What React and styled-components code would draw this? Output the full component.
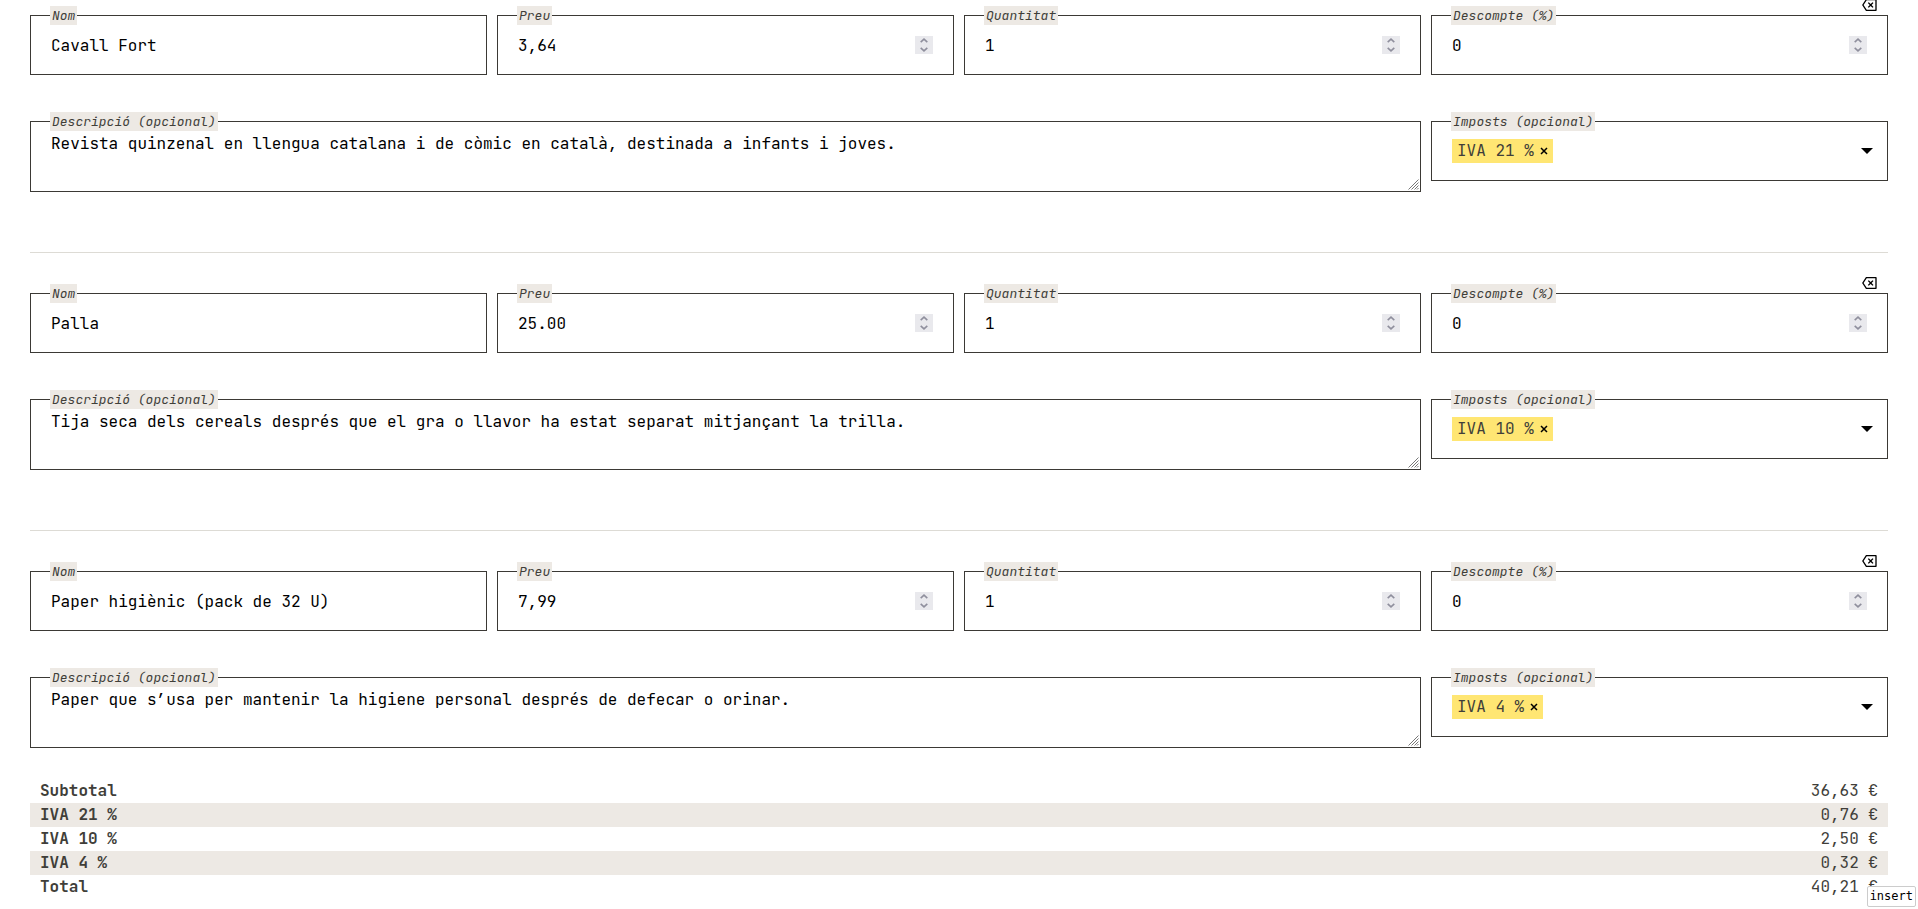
import React, { useState } from "react";
import styled, { createGlobalStyle } from "styled-components";
import { RiDeleteBack2Line } from "react-icons/ri";

const GlobalStyle = createGlobalStyle`
  *, *::before, *::after {
    box-sizing: border-box;
  }

  body {
    margin: 0;
    background: #fff;
    color: #403e39;
    font-family: "JetBrains Mono", "DejaVu Sans Mono", monospace;
    font-size: 16px;
    line-height: 24px;
  }

  input, textarea, select, button {
    font: inherit;
  }
`;

const Form = styled.form`
  padding: 0 30px;
`;

const Product = styled.section`
  position: relative;
  display: grid;
  grid-template-columns: repeat(4, minmax(0, 1fr));
  column-gap: 10px;
  row-gap: 46px;
  align-items: start;
  margin-bottom: 25px;
  padding: 15px 0 60px;
  border-bottom: 1px solid #dddbd5;

  &:last-of-type {
    margin-bottom: 31px;
    padding-bottom: 0;
    border-bottom: 0;
  }
`;

const RemoveButton = styled.button`
  position: absolute;
  top: -3px;
  right: 10px;
  display: flex;
  padding: 0;
  border: 0;
  background: none;
  color: #000;
  font-size: 16px;
  cursor: pointer;
`;

const Field = styled.div`
  position: relative;
  display: flex;
  align-items: center;
  grid-column: span ${(props) => props.$span || 1};
  height: ${(props) => (props.$tall ? "71px" : "60px")};
  border: 1px solid #3b3935;
`;

const Label = styled.label`
  position: absolute;
  top: -10px;
  left: 19px;
  padding: 0 2px;
  background: #ede9e4;
  font-size: 13px;
  font-style: italic;
  line-height: 19px;
`;

const Input = styled.input`
  flex: 1;
  min-width: 0;
  height: 100%;
  padding: 0 20px;
  border: 0;
  outline: 0;
  background: none;
  color: #000;
`;

const TextArea = styled.textarea`
  flex: 1;
  height: 100%;
  padding: 10px 20px;
  border: 0;
  outline: 0;
  background: none;
  color: #000;
  resize: none;
`;

const Grip = styled.svg`
  position: absolute;
  right: 1px;
  bottom: 1px;
  pointer-events: none;
`;

const Spinner = styled.span`
  display: flex;
  flex-direction: column;
  flex: none;
  width: 18px;
  height: 18px;
  margin-right: 20px;
  background: #e9e9ed;
`;

const Step = styled.button`
  display: flex;
  align-items: center;
  justify-content: center;
  height: 9px;
  padding: 0;
  border: 0;
  background: none;
  color: #8f8f9d;
`;

const Tag = styled.span`
  display: flex;
  align-items: center;
  gap: 6px;
  margin-left: 20px;
  padding: 0 5px;
  background: #ffe673;
  white-space: pre;
`;

const TagRemove = styled.button`
  display: flex;
  padding: 0;
  border: 0;
  background: none;
  color: #000;
`;

const Select = styled.select`
  flex: 1;
  min-width: 0;
  height: 100%;
  border: 0;
  outline: 0;
  background: none;
  appearance: none;
`;

const Caret = styled.svg`
  position: absolute;
  right: 14px;
  pointer-events: none;
`;

const Totals = styled.table`
  width: 100%;
  border-collapse: collapse;

  tr:nth-child(even) {
    background: #ede9e4;
  }

  th,
  td {
    padding: 0 10px;
  }

  th {
    text-align: left;
  }

  td {
    text-align: right;
  }
`;

const Hint = styled.div`
  position: fixed;
  right: 2px;
  bottom: 2px;
  padding: 0 2px;
  border: 1px solid #ccc;
  border-radius: 2px;
  background: #fff;
  color: #000;
  font-family: "DejaVu Sans Mono", monospace;
  font-size: 12px;
  line-height: 19px;
`;

const taxes = ["IVA 21 %", "IVA 10 %", "IVA 4 %"];

const products = [
  {
    name: "Cavall Fort",
    price: "3,64",
    description:
      "Revista quinzenal en llengua catalana i de còmic en català, destinada a infants i joves.",
    tax: "IVA 21 %",
  },
  {
    name: "Palla",
    price: "25.00",
    description:
      "Tija seca dels cereals després que el gra o llavor ha estat separat mitjançant la trilla.",
    tax: "IVA 10 %",
  },
  {
    name: "Paper higiènic (pack de 32 U)",
    price: "7,99",
    description:
      "Paper que s’usa per mantenir la higiene personal després de defecar o orinar.",
    tax: "IVA 4 %",
  },
];

const totals = [
  ["Subtotal", "36,63 €"],
  ["IVA 21 %", "0,76 €"],
  ["IVA 10 %", "2,50 €"],
  ["IVA 4 %", "0,32 €"],
  ["Total", "40,21 €"],
];

const NumberField = ({ id, label, value }) => {
  const [number, setNumber] = useState(value);
  const step = (by) =>
    setNumber(String((parseFloat(number.replace(",", ".")) || 0) + by));

  return (
    <Field>
      <Input
        id={id}
        inputMode="decimal"
        value={number}
        onChange={(e) => setNumber(e.target.value)}
      />
      <Label htmlFor={id}>{label}</Label>
      <Spinner>
        <Step type="button" tabIndex={-1} aria-label="+1" onClick={() => step(1)}>
          <svg width="8" height="5" viewBox="0 0 8 5" fill="none">
            <path d="M.7 4.2 4 1.2 7.3 4.2" stroke="currentColor" strokeWidth="1.6" />
          </svg>
        </Step>
        <Step type="button" tabIndex={-1} aria-label="-1" onClick={() => step(-1)}>
          <svg width="8" height="5" viewBox="0 0 8 5" fill="none">
            <path d="M.7 .8 4 3.8 7.3 .8" stroke="currentColor" strokeWidth="1.6" />
          </svg>
        </Step>
      </Spinner>
    </Field>
  );
};

const TaxField = ({ id, value }) => {
  const [tax, setTax] = useState(value);

  return (
    <Field>
      {tax && (
        <Tag>
          {tax}
          <TagRemove
            type="button"
            aria-label={`Treu ${tax}`}
            onClick={() => setTax("")}
          >
            <svg width="8" height="8" viewBox="0 0 8 8">
              <path d="M1 1 7 7M7 1 1 7" stroke="currentColor" strokeWidth="1.5" />
            </svg>
          </TagRemove>
        </Tag>
      )}
      <Select id={id} value="" onChange={(e) => setTax(e.target.value)}>
        <option value="" />
        {taxes.map((name) => (
          <option key={name}>{name}</option>
        ))}
      </Select>
      <Label htmlFor={id}>Imposts (opcional)</Label>
      <Caret width="12" height="6" viewBox="0 0 12 6">
        <path d="M0 0h12L6 6z" />
      </Caret>
    </Field>
  );
};

const ProductForm = ({ id, product }) => {
  return (
    <Product>
      <RemoveButton type="button" aria-label="Esborra">
        <RiDeleteBack2Line />
      </RemoveButton>
      <Field>
        <Input id={`${id}-name`} defaultValue={product.name} />
        <Label htmlFor={`${id}-name`}>Nom</Label>
      </Field>
      <NumberField id={`${id}-price`} label="Preu" value={product.price} />
      <NumberField id={`${id}-quantity`} label="Quantitat" value="1" />
      <NumberField id={`${id}-discount`} label="Descompte (%)" value="0" />
      <Field $span={3} $tall>
        <TextArea
          id={`${id}-description`}
          spellCheck={false}
          defaultValue={product.description}
        />
        <Label htmlFor={`${id}-description`}>Descripció (opcional)</Label>
        <Grip width="11" height="11" viewBox="0 0 11 11" fill="none">
          <path
            d="M.5 10.5l10-10M3.5 10.5l7-7M6.5 10.5l4-4M9 10.5l1.5-1.5"
            stroke="#777"
          />
        </Grip>
      </Field>
      <TaxField id={`${id}-tax`} value={product.tax} />
    </Product>
  );
};

const App = () => {
  return (
    <>
      <GlobalStyle />
      <Form>
        {products.map((product, index) => (
          <ProductForm
            key={product.name}
            id={`product-${index}`}
            product={product}
          />
        ))}
        <Totals>
          <tbody>
            {totals.map(([name, amount]) => (
              <tr key={name}>
                <th scope="row">{name}</th>
                <td>{amount}</td>
              </tr>
            ))}
          </tbody>
        </Totals>
      </Form>
      <Hint>insert</Hint>
    </>
  );
};

export default App;
